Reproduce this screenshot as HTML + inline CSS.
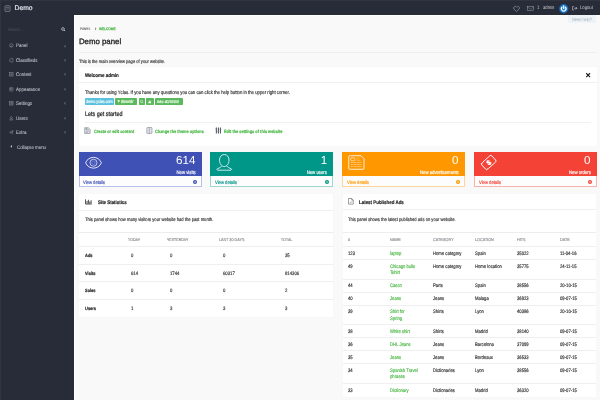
<!DOCTYPE html>
<html><head><meta charset="utf-8"><title>Demo panel</title>
<style>
html,body{margin:0;padding:0;width:600px;height:400px;overflow:hidden;background:#f9f9f9}
body{position:relative;font-family:"Liberation Sans",sans-serif}
.r{position:absolute;display:block}
#txt{position:absolute;left:0;top:0;width:600px;height:400px;will-change:transform}
.t{position:absolute;white-space:nowrap;line-height:0;text-rendering:geometricPrecision}
svg.r{overflow:visible}
</style></head><body>
<div class="r" style="left:0.00px;top:0.00px;width:600.00px;height:400.00px;background:#f9f9f9"></div>
<div class="r" style="left:0.00px;top:0.00px;width:600.00px;height:14.70px;background:#282c38"></div>
<div class="r" style="left:0.00px;top:0.00px;width:73.60px;height:400.00px;background:#282c38"></div>
<div class="r" style="left:0.00px;top:0.00px;width:600.00px;height:0.80px;background:#30343f"></div>
<div class="r" style="left:0.00px;top:0.00px;width:0.80px;height:400.00px;background:#30343f"></div>
<div class="r" style="left:73.60px;top:14.70px;width:526.40px;height:385.30px;background:#f9f9f9;border-left:1px solid #fff;border-top:1px solid #fff;box-sizing:border-box"></div>
<svg class="r" style="left:4px;top:4.5px" width="7" height="7" viewBox="0 0 7 7"><rect x="1" y="0.8" width="5" height="5.6" rx="0.6" fill="none" stroke="#8b909c" stroke-width="0.7"/><line x1="2" y1="2.5" x2="5" y2="2.5" stroke="#8b909c" stroke-width="0.5"/><line x1="2" y1="4" x2="5" y2="4" stroke="#8b909c" stroke-width="0.5"/></svg>
<svg class="r" style="left:512.5px;top:5.8px" width="7" height="6" viewBox="0 0 14 12"><path d="M7 11 L1.8 6 A3 3 0 0 1 7 2.2 A3 3 0 0 1 12.2 6 Z" fill="none" stroke="#b9bdc5" stroke-width="1.0" stroke-linejoin="round"/></svg>
<svg class="r" style="left:526.5px;top:6px" width="7" height="5" viewBox="0 0 14 10"><rect x="0.8" y="0.8" width="12.4" height="8.4" fill="none" stroke="#a9adb6" stroke-width="0.9"/><path d="M0.8 2 L7 6 L13.2 2" fill="none" stroke="#a9adb6" stroke-width="0.7"/></svg>
<svg class="r" style="left:559px;top:4px" width="9.4" height="9.4" viewBox="0 0 20 20"><circle cx="10" cy="10" r="10" fill="#1565b5"/><circle cx="10" cy="10" r="7.6" fill="#2a86d0"/><path d="M6.4 6.6 A4.9 4.9 0 1 0 13.6 6.6" fill="none" stroke="#fff" stroke-width="2.4" stroke-linecap="round"/><line x1="10" y1="3.8" x2="10" y2="9.6" stroke="#fff" stroke-width="2.4" stroke-linecap="round"/></svg>
<svg class="r" style="left:572.3px;top:6.3px" width="5.5" height="4.5" viewBox="0 0 11 9"><path d="M4 1 H1 V8 H4" fill="none" stroke="#c9ccd3" stroke-width="1.1"/><path d="M4 4.5 H10 M7.5 2 L10 4.5 L7.5 7" fill="none" stroke="#c9ccd3" stroke-width="1.3"/></svg>
<div class="r" style="left:567.50px;top:15.30px;width:28.80px;height:7.30px;background:#eef3f8;border-radius:0 0 1px 1px"></div>
<svg class="r" style="left:60.8px;top:26.8px" width="4.6" height="4.6" viewBox="0 0 10 10"><circle cx="4.3" cy="4.3" r="3" fill="none" stroke="#dfe2e8" stroke-width="1.4"/><line x1="6.5" y1="6.5" x2="9" y2="9" stroke="#dfe2e8" stroke-width="1.6"/></svg>
<svg class="r" style="left:8.7px;top:43.30px" width="4.6" height="4.6" viewBox="0 0 10 10"><circle cx="5" cy="5.3" r="3.8" fill="none" stroke="#8c919c" stroke-width="1.1"/><path d="M5 5.3 L6.8 3.2" stroke="#8c919c" stroke-width="1"/><path d="M2.3 7.6 H7.7" stroke="#8c919c" stroke-width="1"/></svg>
<svg class="r" style="left:63.8px;top:44.50px" width="2" height="2.6" viewBox="0 0 6 8"><path d="M5 0.8 L1.3 4 L5 7.2" fill="none" stroke="#b4b8c1" stroke-width="1.5"/></svg>
<svg class="r" style="left:8.7px;top:57.75px" width="4.6" height="4.6" viewBox="0 0 10 10"><path d="M1.5 3 L3.2 1.2 H8.5 V8.8 H3.2 L1.5 7 Z" fill="none" stroke="#8c919c" stroke-width="1.1"/><circle cx="3.6" cy="5" r="0.7" fill="#8c919c"/></svg>
<svg class="r" style="left:63.8px;top:58.95px" width="2" height="2.6" viewBox="0 0 6 8"><path d="M5 0.8 L1.3 4 L5 7.2" fill="none" stroke="#b4b8c1" stroke-width="1.5"/></svg>
<svg class="r" style="left:8.7px;top:72.20px" width="4.6" height="4.6" viewBox="0 0 10 10"><rect x="1.2" y="1.2" width="7.6" height="7.6" fill="none" stroke="#8c919c" stroke-width="1.1"/><path d="M5 1.2 V8.8 M1.2 5 H8.8" stroke="#8c919c" stroke-width="1"/></svg>
<svg class="r" style="left:63.8px;top:73.40px" width="2" height="2.6" viewBox="0 0 6 8"><path d="M5 0.8 L1.3 4 L5 7.2" fill="none" stroke="#b4b8c1" stroke-width="1.5"/></svg>
<svg class="r" style="left:8.7px;top:86.65px" width="4.6" height="4.6" viewBox="0 0 10 10"><rect x="1.4" y="1.2" width="7.2" height="7.6" rx="0.8" fill="none" stroke="#8c919c" stroke-width="1.1"/><rect x="3.4" y="3.2" width="3.2" height="3.2" fill="none" stroke="#8c919c" stroke-width="0.8"/></svg>
<svg class="r" style="left:63.8px;top:87.85px" width="2" height="2.6" viewBox="0 0 6 8"><path d="M5 0.8 L1.3 4 L5 7.2" fill="none" stroke="#b4b8c1" stroke-width="1.5"/></svg>
<svg class="r" style="left:8.7px;top:101.10px" width="4.6" height="4.6" viewBox="0 0 10 10"><rect x="1.2" y="1.2" width="7.6" height="7.6" fill="none" stroke="#8c919c" stroke-width="1.1"/><path d="M1.2 3.8 H8.8 M1.2 6.2 H8.8 M5 1.2 V8.8" stroke="#8c919c" stroke-width="0.9"/></svg>
<svg class="r" style="left:63.8px;top:102.30px" width="2" height="2.6" viewBox="0 0 6 8"><path d="M5 0.8 L1.3 4 L5 7.2" fill="none" stroke="#b4b8c1" stroke-width="1.5"/></svg>
<svg class="r" style="left:8.7px;top:115.55px" width="4.6" height="4.6" viewBox="0 0 10 10"><circle cx="5" cy="3.4" r="2.2" fill="none" stroke="#8c919c" stroke-width="1"/><path d="M1.3 8.8 Q1.5 6 5 6 Q8.5 6 8.7 8.8 Z" fill="none" stroke="#8c919c" stroke-width="1"/></svg>
<svg class="r" style="left:63.8px;top:116.75px" width="2" height="2.6" viewBox="0 0 6 8"><path d="M5 0.8 L1.3 4 L5 7.2" fill="none" stroke="#b4b8c1" stroke-width="1.5"/></svg>
<svg class="r" style="left:8.7px;top:130.00px" width="4.6" height="4.6" viewBox="0 0 10 10"><path d="M1 5.2 L8.8 1.2 L6.8 8.8 L4.6 6.2 Z M4.6 6.2 L8.8 1.2" fill="none" stroke="#8c919c" stroke-width="1" stroke-linejoin="round"/></svg>
<svg class="r" style="left:63.8px;top:131.20px" width="2" height="2.6" viewBox="0 0 6 8"><path d="M5 0.8 L1.3 4 L5 7.2" fill="none" stroke="#b4b8c1" stroke-width="1.5"/></svg>
<svg class="r" style="left:10.0px;top:145.45px" width="2.2" height="2.8" viewBox="0 0 6 8"><path d="M5.5 0.3 L0.8 4 L5.5 7.7 Z" fill="#c4c8d0"/></svg>
<div class="r" style="left:79.00px;top:51.80px;width:517.50px;height:0.50px;background:#efefef"></div>
<div class="r" style="left:79.00px;top:67.10px;width:517.50px;height:78.50px;background:#fff;box-shadow:0 0 0.6px rgba(0,0,0,0.12)"></div>
<svg class="r" style="left:585.9px;top:73.0px" width="4.3" height="4.3" viewBox="0 0 10 10"><path d="M1.5 1.5 L8.5 8.5 M8.5 1.5 L1.5 8.5" stroke="#1a1a1a" stroke-width="2.6" stroke-linecap="square"/></svg>
<div class="r" style="left:79.00px;top:82.10px;width:517.50px;height:0.50px;background:#f0f0f0"></div>
<div class="r" style="left:84.80px;top:98.30px;width:29.20px;height:6.40px;background:#5bc0de;border-radius:0.8px"></div>
<div class="r" style="left:114.80px;top:98.30px;width:22.50px;height:6.40px;background:#5cb85c;border-radius:0.8px"></div>
<div class="r" style="left:138.70px;top:98.30px;width:6.10px;height:6.40px;background:#5cb85c;border-radius:0.8px"></div>
<div class="r" style="left:145.70px;top:98.30px;width:8.30px;height:6.40px;background:#5cb85c;border-radius:0.8px"></div>
<div class="r" style="left:155.20px;top:98.30px;width:28.00px;height:6.40px;background:#5cb85c;border-radius:0.8px"></div>
<svg class="r" style="left:117px;top:100.2px" width="3.4" height="3" viewBox="0 0 10 9"><path d="M1 1 H9 L5 8 Z" fill="#fff"/></svg>
<svg class="r" style="left:140px;top:99.7px" width="3.5" height="3.5" viewBox="0 0 10 10"><circle cx="4.2" cy="4.2" r="3" fill="none" stroke="#fff" stroke-width="1.4"/><path d="M6.4 6.4 L9 9" stroke="#fff" stroke-width="1.6"/></svg>
<svg class="r" style="left:148px;top:99.6px" width="3.6" height="3.6" viewBox="0 0 10 10"><path d="M1 9 V5 H3 L5 1 Q6.5 1 6.3 3 L6 4.5 H9 L8 9 Z" fill="#fff"/></svg>
<div class="r" style="left:84.80px;top:121.70px;width:505.90px;height:0.50px;background:#f1f1f1"></div>
<svg class="r" style="left:84.30px;top:127.2px" width="6.8" height="6.8" viewBox="0 0 10 10"><path d="M1 1 H6.5 L9 3.5 V9.5 H1 Z" fill="#e4e6ea" stroke="#7d828c" stroke-width="0.9"/><path d="M2.5 4 H7.5 M2.5 6 H7.5 M2.5 8 H6" stroke="#8a8f99" stroke-width="0.8"/><rect x="2.3" y="1.8" width="2.6" height="1.6" fill="#8a8f99"/></svg>
<svg class="r" style="left:145.70px;top:127.2px" width="6.8" height="6.8" viewBox="0 0 10 10"><rect x="1.2" y="0.8" width="7.6" height="8.6" rx="0.6" fill="#e6e8ec" stroke="#7d828c" stroke-width="0.9"/><path d="M5 0.8 V9.4" stroke="#8a8f99" stroke-width="0.8"/><rect x="2" y="3.5" width="2.2" height="3" fill="#c9d0e0"/></svg>
<svg class="r" style="left:215.00px;top:127.2px" width="6.8" height="6.8" viewBox="0 0 10 10"><path d="M2 0.8 V9.5 M5 0.8 V9.5 M8 0.8 V9.5" stroke="#4d5360" stroke-width="1.5"/><path d="M0.8 3 H3.2 M3.8 6.5 H6.2 M6.8 4 H9.2" stroke="#6b7280" stroke-width="1.4"/></svg>
<div class="r" style="left:78.60px;top:152.20px;width:123.00px;height:35.30px;background:#fdfdfd;border:0.6px solid #b8c0e8;box-sizing:border-box"></div>
<div class="r" style="left:78.60px;top:152.20px;width:123.00px;height:23.60px;background:#3f51b5"></div>
<svg class="r" style="left:193.00px;top:179.8px" width="4" height="4" viewBox="0 0 10 10"><circle cx="5" cy="5" r="5" fill="#3f51b5"/><path d="M3.2 5 H6.5 M5 3.3 L6.7 5 L5 6.7" fill="none" stroke="#fff" stroke-width="1.4"/></svg>
<div class="r" style="left:210.40px;top:152.20px;width:122.90px;height:35.30px;background:#fdfdfd;border:0.6px solid #9fd6d0;box-sizing:border-box"></div>
<div class="r" style="left:210.40px;top:152.20px;width:122.90px;height:23.60px;background:#009688"></div>
<svg class="r" style="left:324.70px;top:179.8px" width="4" height="4" viewBox="0 0 10 10"><circle cx="5" cy="5" r="5" fill="#009688"/><path d="M3.2 5 H6.5 M5 3.3 L6.7 5 L5 6.7" fill="none" stroke="#fff" stroke-width="1.4"/></svg>
<div class="r" style="left:342.00px;top:152.20px;width:122.60px;height:35.30px;background:#fdfdfd;border:0.6px solid #ffd49a;box-sizing:border-box"></div>
<div class="r" style="left:342.00px;top:152.20px;width:122.60px;height:23.60px;background:#ff9800"></div>
<svg class="r" style="left:456.00px;top:179.8px" width="4" height="4" viewBox="0 0 10 10"><circle cx="5" cy="5" r="5" fill="#ff9800"/><path d="M3.2 5 H6.5 M5 3.3 L6.7 5 L5 6.7" fill="none" stroke="#fff" stroke-width="1.4"/></svg>
<div class="r" style="left:473.80px;top:152.20px;width:122.80px;height:35.30px;background:#fdfdfd;border:0.6px solid #f8b3ad;box-sizing:border-box"></div>
<div class="r" style="left:473.80px;top:152.20px;width:122.80px;height:23.60px;background:#f44336"></div>
<svg class="r" style="left:588.00px;top:179.8px" width="4" height="4" viewBox="0 0 10 10"><circle cx="5" cy="5" r="5" fill="#f44336"/><path d="M3.2 5 H6.5 M5 3.3 L6.7 5 L5 6.7" fill="none" stroke="#fff" stroke-width="1.4"/></svg>
<svg class="r" style="left:84.5px;top:156.5px" width="17" height="11.5" viewBox="0 0 34 23"><path d="M1.2 11.5 C7 -2.8 27 -2.8 32.8 11.5 C27 25.8 7 25.8 1.2 11.5 Z" fill="none" stroke="#fff" stroke-width="1.7"/><circle cx="17" cy="11.5" r="7.0" fill="none" stroke="#fff" stroke-width="1.3"/><circle cx="17" cy="11.5" r="3.4" fill="none" stroke="#fff" stroke-width="0.7" opacity="0.6"/></svg>
<svg class="r" style="left:216px;top:154px" width="17" height="17" viewBox="0 0 34 34"><path d="M16.5 1 C22.5 1 26 6 26 12.5 C26 19 21.5 25.2 16.5 25.2 C11.5 25.2 7 19 7 12.5 C7 6 10.5 1 16.5 1 Z" fill="none" stroke="#fff" stroke-width="1.6"/><path d="M11.5 23.8 Q9.5 27.5 2.5 29.6 Q0.8 31.2 3 32.4 H30 Q32.2 31.2 30.5 29.6 Q23.5 27.5 21.5 23.8" fill="none" stroke="#fff" stroke-width="1.6"/></svg>
<svg class="r" style="left:347.5px;top:154.5px" width="17" height="15.5" viewBox="0 0 34 31"><path d="M3 1.5 H26 L32 7.5 V27 Q32 28.5 30.5 28.5 H3 Q1.5 28.5 1.5 27 V3 Q1.5 1.5 3 1.5 Z" fill="none" stroke="#fff" stroke-width="1.7"/><rect x="5.5" y="5.5" width="8" height="6" rx="2" fill="none" stroke="#fff" stroke-width="1.2"/><path d="M17 6.5 H21 M17 10.5 H25 M6 15 H27 M6 19 H27 M6 23 H27" stroke="#fff" stroke-width="1.0" stroke-dasharray="2 0.8"/></svg>
<svg class="r" style="left:479.5px;top:154px" width="17.5" height="17" viewBox="0 0 35 34"><g transform="rotate(-42 17.5 17)"><path d="M5 8.5 Q7 10.5 9 8.5 H28 Q31 8.5 31 11.5 V22.5 Q31 25.5 28 25.5 H9 Q7 23.5 5 25.5 Q4 25.5 4 22.5 V11.5 Q4 8.5 5 8.5 Z" fill="none" stroke="#fff" stroke-width="1.8"/><text x="17.8" y="21.8" font-size="13" font-family="Liberation Sans" fill="none" stroke="#fff" stroke-width="1" text-anchor="middle">$</text></g></svg>
<div class="r" style="left:79.00px;top:194.20px;width:254.30px;height:123.30px;background:#fff;box-shadow:0 0 0.6px rgba(0,0,0,0.12)"></div>
<svg class="r" style="left:84.6px;top:198.8px" width="7" height="5.6" viewBox="0 0 14 11"><path d="M1 0.5 V10 H13.5" fill="none" stroke="#2a2a2a" stroke-width="1.5"/><path d="M4 9.2 V4 M6.8 9.2 V1.5 M9.6 9.2 V5 M12.2 9.2 V2.5" stroke="#2a2a2a" stroke-width="1.7"/></svg>
<div class="r" style="left:79.00px;top:210.00px;width:254.30px;height:0.50px;background:#efefef"></div>
<div class="r" style="left:79.00px;top:232.20px;width:254.30px;height:0.50px;background:#ededed"></div>
<div class="r" style="left:79.00px;top:246.00px;width:254.30px;height:0.50px;background:#efefef"></div>
<div class="r" style="left:79.00px;top:263.60px;width:254.30px;height:0.50px;background:#efefef"></div>
<div class="r" style="left:79.00px;top:281.40px;width:254.30px;height:0.50px;background:#efefef"></div>
<div class="r" style="left:79.00px;top:299.20px;width:254.30px;height:0.50px;background:#efefef"></div>
<div class="r" style="left:342.50px;top:193.60px;width:253.50px;height:203.20px;background:#fff;box-shadow:0 0 0.6px rgba(0,0,0,0.12)"></div>
<svg class="r" style="left:347.8px;top:198.3px" width="5.8" height="6.6" viewBox="0 0 12 14"><path d="M1 1 H7.5 L11 4.5 V13 H1 Z" fill="none" stroke="#444" stroke-width="1.1"/><path d="M7.5 1 V4.5 H11" fill="none" stroke="#444" stroke-width="0.9"/><path d="M4 8.5 L5.5 10 L8.5 7" fill="none" stroke="#444" stroke-width="1"/></svg>
<div class="r" style="left:342.50px;top:209.40px;width:253.50px;height:0.50px;background:#efefef"></div>
<div class="r" style="left:342.50px;top:232.10px;width:253.50px;height:0.50px;background:#ededed"></div>
<div class="r" style="left:342.50px;top:245.95px;width:253.50px;height:0.50px;background:#efefef"></div>
<div class="r" style="left:342.50px;top:258.95px;width:253.50px;height:0.50px;background:#efefef"></div>
<div class="r" style="left:342.50px;top:278.55px;width:253.50px;height:0.50px;background:#efefef"></div>
<div class="r" style="left:342.50px;top:291.55px;width:253.50px;height:0.50px;background:#efefef"></div>
<div class="r" style="left:342.50px;top:304.55px;width:253.50px;height:0.50px;background:#efefef"></div>
<div class="r" style="left:342.50px;top:324.15px;width:253.50px;height:0.50px;background:#efefef"></div>
<div class="r" style="left:342.50px;top:337.15px;width:253.50px;height:0.50px;background:#efefef"></div>
<div class="r" style="left:342.50px;top:350.15px;width:253.50px;height:0.50px;background:#efefef"></div>
<div class="r" style="left:342.50px;top:363.15px;width:253.50px;height:0.50px;background:#efefef"></div>
<div class="r" style="left:342.50px;top:382.75px;width:253.50px;height:0.50px;background:#efefef"></div>
<div id="txt"><div class="t" style="left:14.60px;transform-origin:0 0;top:9px;font-size:6.75px;color:#e6e9f0;font-weight:normal;-webkit-text-stroke:0.16px #e6e9f0;">Demo</div>
<div class="t" style="left:537.00px;transform-origin:0 0;top:9px;font-size:4.96px;color:#c9cdd4;font-weight:normal;transform:scaleX(0.8475);-webkit-text-stroke:0.16px #c9cdd4;-webkit-text-stroke:0">1</div>
<div class="t" style="left:543.30px;transform-origin:0 0;top:9px;font-size:4.96px;color:#c9cdd4;font-weight:normal;transform:scaleX(0.8475);-webkit-text-stroke:0.16px #c9cdd4;-webkit-text-stroke:0">admin</div>
<div class="t" style="left:580.00px;transform-origin:0 0;top:9px;font-size:4.96px;color:#c9cdd4;font-weight:normal;transform:scaleX(0.8475);-webkit-text-stroke:0.16px #c9cdd4;-webkit-text-stroke:0">Logout</div>
<div class="t" style="left:572.00px;transform-origin:0 0;top:20px;font-size:4.60px;color:#aab1bb;font-weight:normal;transform:scaleX(0.8475);-webkit-text-stroke:0.16px #aab1bb;-webkit-text-stroke:0">Need help?</div>
<div class="t" style="left:8.10px;transform-origin:0 0;top:30px;font-size:4.60px;color:#4d525e;font-weight:normal;transform:scaleX(0.8475);-webkit-text-stroke:0.16px #4d525e;-webkit-text-stroke:0">Search...</div>
<div class="t" style="left:16.30px;transform-origin:0 0;top:46px;font-size:5.25px;color:#cdd1d9;font-weight:normal;transform:scaleX(0.8475);-webkit-text-stroke:0.16px #cdd1d9;-webkit-text-stroke:0.03px #cdd1d9">Panel</div>
<div class="t" style="left:16.30px;transform-origin:0 0;top:61px;font-size:5.25px;color:#cdd1d9;font-weight:normal;transform:scaleX(0.8475);-webkit-text-stroke:0.16px #cdd1d9;-webkit-text-stroke:0.03px #cdd1d9">Classifieds</div>
<div class="t" style="left:16.30px;transform-origin:0 0;top:75px;font-size:5.25px;color:#cdd1d9;font-weight:normal;transform:scaleX(0.8475);-webkit-text-stroke:0.16px #cdd1d9;-webkit-text-stroke:0.03px #cdd1d9">Content</div>
<div class="t" style="left:16.30px;transform-origin:0 0;top:90px;font-size:5.25px;color:#cdd1d9;font-weight:normal;transform:scaleX(0.8475);-webkit-text-stroke:0.16px #cdd1d9;-webkit-text-stroke:0.03px #cdd1d9">Appearance</div>
<div class="t" style="left:16.30px;transform-origin:0 0;top:104px;font-size:5.25px;color:#cdd1d9;font-weight:normal;transform:scaleX(0.8475);-webkit-text-stroke:0.16px #cdd1d9;-webkit-text-stroke:0.03px #cdd1d9">Settings</div>
<div class="t" style="left:16.30px;transform-origin:0 0;top:119px;font-size:5.25px;color:#cdd1d9;font-weight:normal;transform:scaleX(0.8475);-webkit-text-stroke:0.16px #cdd1d9;-webkit-text-stroke:0.03px #cdd1d9">Users</div>
<div class="t" style="left:16.30px;transform-origin:0 0;top:133px;font-size:5.25px;color:#cdd1d9;font-weight:normal;transform:scaleX(0.8475);-webkit-text-stroke:0.16px #cdd1d9;-webkit-text-stroke:0.03px #cdd1d9">Extra</div>
<div class="t" style="left:16.90px;transform-origin:0 0;top:148px;font-size:5.14px;color:#cdd1d9;font-weight:normal;transform:scaleX(0.8475);-webkit-text-stroke:0.16px #cdd1d9;-webkit-text-stroke:0.03px #cdd1d9">Collapse menu</div>
<div class="t" style="left:80.20px;transform-origin:0 0;top:29px;font-size:3.67px;color:#6a6d72;font-weight:normal;transform:scaleX(0.8929);-webkit-text-stroke:0.16px #6a6d72;">PANEL</div>
<div class="t" style="left:95.00px;transform-origin:0 0;top:29px;font-size:4.72px;color:#555;font-weight:normal;transform:scaleX(0.8475);-webkit-text-stroke:0.16px #555;">&#8250;</div>
<div class="t" style="left:99.00px;transform-origin:0 0;top:29px;font-size:3.62px;color:#4cb847;font-weight:normal;transform:scaleX(0.8929);-webkit-text-stroke:0.16px #4cb847;-webkit-text-stroke:0.25px #4cb847">WELCOME</div>
<div class="t" style="left:78.90px;transform-origin:0 0;top:42px;font-size:7.85px;color:#222;font-weight:normal;-webkit-text-stroke:0.16px #222;-webkit-text-stroke:0.3px #222">Demo panel</div>
<div class="t" style="left:78.80px;transform-origin:0 0;top:63px;font-size:4.84px;color:#333;font-weight:normal;transform:scaleX(0.8475);-webkit-text-stroke:0.16px #333;">This is the main overview page of your website.</div>
<div class="t" style="left:84.80px;transform-origin:0 0;top:76px;font-size:5.26px;color:#222;font-weight:bold;transform:scaleX(0.8475);-webkit-text-stroke:0.18px #222;">Welcome admin</div>
<div class="t" style="left:84.80px;transform-origin:0 0;top:93px;font-size:5.05px;color:#333;font-weight:normal;transform:scaleX(0.8475);-webkit-text-stroke:0.16px #333;">Thanks for using Yclas. If you have any questions you can can click the help button in the upper right corner.</div>
<div class="t" style="left:86.00px;transform-origin:0 0;top:102px;font-size:4.37px;color:#f2fbff;font-weight:normal;transform:scaleX(0.8475);-webkit-text-stroke:0.16px #f2fbff;">demo.yclas.com</div>
<div class="t" style="left:121.40px;transform-origin:0 0;top:102px;font-size:4.48px;color:#f2fff2;font-weight:normal;transform:scaleX(0.8475);-webkit-text-stroke:0.16px #f2fff2;">downdr</div>
<div class="t" style="left:157.00px;transform-origin:0 0;top:102px;font-size:4.01px;color:#f2fff2;font-weight:normal;transform:scaleX(0.8475);-webkit-text-stroke:0.16px #f2fff2;">Ads: 40/10000</div>
<div class="t" style="left:84.80px;transform-origin:0 0;top:115px;font-size:6.42px;color:#222;font-weight:normal;transform:scaleX(0.8475);-webkit-text-stroke:0.16px #222;-webkit-text-stroke:0.22px #222">Lets get started</div>
<div class="t" style="left:93.50px;transform-origin:0 0;top:132px;font-size:4.60px;color:#4cb847;font-weight:bold;transform:scaleX(0.8475);-webkit-text-stroke:0.18px #4cb847;">Create or edit content</div>
<div class="t" style="left:154.90px;transform-origin:0 0;top:132px;font-size:4.60px;color:#4cb847;font-weight:bold;transform:scaleX(0.8475);-webkit-text-stroke:0.18px #4cb847;">Change the theme options</div>
<div class="t" style="left:224.20px;transform-origin:0 0;top:132px;font-size:4.60px;color:#4cb847;font-weight:bold;transform:scaleX(0.8475);-webkit-text-stroke:0.18px #4cb847;">Edit the settings of this website</div>
<div class="t" style="right:404.60px;transform-origin:100% 0;top:161px;font-size:11.60px;color:#fff;font-weight:normal;-webkit-text-stroke:0px #fff;">614</div>
<div class="t" style="right:404.60px;transform-origin:100% 0;top:173px;font-size:5.05px;color:#fff;font-weight:normal;transform:scaleX(0.8475);-webkit-text-stroke:0.16px #fff;">New visits</div>
<div class="t" style="left:83.40px;transform-origin:0 0;top:184px;font-size:4.92px;color:#3f51b5;font-weight:normal;transform:scaleX(0.8475);-webkit-text-stroke:0.16px #3f51b5;">View details</div>
<div class="t" style="right:272.90px;transform-origin:100% 0;top:161px;font-size:11.60px;color:#fff;font-weight:normal;-webkit-text-stroke:0px #fff;">1</div>
<div class="t" style="right:272.90px;transform-origin:100% 0;top:173px;font-size:5.05px;color:#fff;font-weight:normal;transform:scaleX(0.8475);-webkit-text-stroke:0.16px #fff;">New users</div>
<div class="t" style="left:215.20px;transform-origin:0 0;top:184px;font-size:4.92px;color:#009688;font-weight:normal;transform:scaleX(0.8475);-webkit-text-stroke:0.16px #009688;">View details</div>
<div class="t" style="right:141.60px;transform-origin:100% 0;top:161px;font-size:11.60px;color:#fff;font-weight:normal;-webkit-text-stroke:0px #fff;">0</div>
<div class="t" style="right:141.60px;transform-origin:100% 0;top:173px;font-size:5.05px;color:#fff;font-weight:normal;transform:scaleX(0.8475);-webkit-text-stroke:0.16px #fff;">New advertisements</div>
<div class="t" style="left:346.80px;transform-origin:0 0;top:184px;font-size:4.92px;color:#ff9800;font-weight:normal;transform:scaleX(0.8475);-webkit-text-stroke:0.16px #ff9800;">View details</div>
<div class="t" style="right:9.60px;transform-origin:100% 0;top:161px;font-size:11.60px;color:#fff;font-weight:normal;-webkit-text-stroke:0px #fff;">0</div>
<div class="t" style="right:9.60px;transform-origin:100% 0;top:173px;font-size:5.05px;color:#fff;font-weight:normal;transform:scaleX(0.8475);-webkit-text-stroke:0.16px #fff;">New orders</div>
<div class="t" style="left:478.60px;transform-origin:0 0;top:184px;font-size:4.92px;color:#f44336;font-weight:normal;transform:scaleX(0.8475);-webkit-text-stroke:0.16px #f44336;">View details</div>
<div class="t" style="left:98.20px;transform-origin:0 0;top:203px;font-size:5.18px;color:#222;font-weight:bold;transform:scaleX(0.8475);-webkit-text-stroke:0.18px #222;">Site Statistics</div>
<div class="t" style="left:84.70px;transform-origin:0 0;top:221px;font-size:4.90px;color:#333;font-weight:normal;transform:scaleX(0.8475);-webkit-text-stroke:0.16px #333;">This panel shows how many visitors your website had the past month.</div>
<div class="t" style="left:128.00px;transform-origin:0 0;top:240px;font-size:3.98px;color:#8e9196;font-weight:normal;transform:scaleX(0.9091);-webkit-text-stroke:0.16px #8e9196;">TODAY</div>
<div class="t" style="left:166.70px;transform-origin:0 0;top:240px;font-size:3.91px;color:#8e9196;font-weight:normal;transform:scaleX(0.9091);-webkit-text-stroke:0.16px #8e9196;">YESTERDAY</div>
<div class="t" style="left:219.40px;transform-origin:0 0;top:240px;font-size:4.11px;color:#8e9196;font-weight:normal;transform:scaleX(0.9091);-webkit-text-stroke:0.16px #8e9196;">LAST 30 DAYS</div>
<div class="t" style="left:281.10px;transform-origin:0 0;top:240px;font-size:3.98px;color:#8e9196;font-weight:normal;transform:scaleX(0.9091);-webkit-text-stroke:0.16px #8e9196;">TOTAL</div>
<div class="t" style="left:84.80px;transform-origin:0 0;top:256px;font-size:4.72px;color:#222;font-weight:bold;transform:scaleX(0.8475);-webkit-text-stroke:0.18px #222;">Ads</div>
<div class="t" style="left:131.40px;transform-origin:0 0;top:256px;font-size:5.01px;color:#333;font-weight:normal;transform:scaleX(0.8475);-webkit-text-stroke:0.16px #333;">0</div>
<div class="t" style="left:170.30px;transform-origin:0 0;top:256px;font-size:5.01px;color:#333;font-weight:normal;transform:scaleX(0.8475);-webkit-text-stroke:0.16px #333;">0</div>
<div class="t" style="left:222.80px;transform-origin:0 0;top:256px;font-size:5.01px;color:#333;font-weight:normal;transform:scaleX(0.8475);-webkit-text-stroke:0.16px #333;">0</div>
<div class="t" style="left:284.50px;transform-origin:0 0;top:256px;font-size:5.01px;color:#333;font-weight:normal;transform:scaleX(0.8475);-webkit-text-stroke:0.16px #333;">35</div>
<div class="t" style="left:84.80px;transform-origin:0 0;top:274px;font-size:4.72px;color:#222;font-weight:bold;transform:scaleX(0.8475);-webkit-text-stroke:0.18px #222;">Visits</div>
<div class="t" style="left:131.40px;transform-origin:0 0;top:274px;font-size:5.01px;color:#333;font-weight:normal;transform:scaleX(0.8475);-webkit-text-stroke:0.16px #333;">614</div>
<div class="t" style="left:170.30px;transform-origin:0 0;top:274px;font-size:5.01px;color:#333;font-weight:normal;transform:scaleX(0.8475);-webkit-text-stroke:0.16px #333;">1744</div>
<div class="t" style="left:222.80px;transform-origin:0 0;top:274px;font-size:5.01px;color:#333;font-weight:normal;transform:scaleX(0.8475);-webkit-text-stroke:0.16px #333;">60317</div>
<div class="t" style="left:284.50px;transform-origin:0 0;top:274px;font-size:5.01px;color:#333;font-weight:normal;transform:scaleX(0.8475);-webkit-text-stroke:0.16px #333;">814306</div>
<div class="t" style="left:84.80px;transform-origin:0 0;top:291px;font-size:4.72px;color:#222;font-weight:bold;transform:scaleX(0.8475);-webkit-text-stroke:0.18px #222;">Sales</div>
<div class="t" style="left:131.40px;transform-origin:0 0;top:291px;font-size:5.01px;color:#333;font-weight:normal;transform:scaleX(0.8475);-webkit-text-stroke:0.16px #333;">0</div>
<div class="t" style="left:170.30px;transform-origin:0 0;top:291px;font-size:5.01px;color:#333;font-weight:normal;transform:scaleX(0.8475);-webkit-text-stroke:0.16px #333;">0</div>
<div class="t" style="left:222.80px;transform-origin:0 0;top:291px;font-size:5.01px;color:#333;font-weight:normal;transform:scaleX(0.8475);-webkit-text-stroke:0.16px #333;">0</div>
<div class="t" style="left:284.50px;transform-origin:0 0;top:291px;font-size:5.01px;color:#333;font-weight:normal;transform:scaleX(0.8475);-webkit-text-stroke:0.16px #333;">2</div>
<div class="t" style="left:84.80px;transform-origin:0 0;top:309px;font-size:4.72px;color:#222;font-weight:bold;transform:scaleX(0.8475);-webkit-text-stroke:0.18px #222;">Users</div>
<div class="t" style="left:131.40px;transform-origin:0 0;top:309px;font-size:5.01px;color:#333;font-weight:normal;transform:scaleX(0.8475);-webkit-text-stroke:0.16px #333;">1</div>
<div class="t" style="left:170.30px;transform-origin:0 0;top:309px;font-size:5.01px;color:#333;font-weight:normal;transform:scaleX(0.8475);-webkit-text-stroke:0.16px #333;">3</div>
<div class="t" style="left:222.80px;transform-origin:0 0;top:309px;font-size:5.01px;color:#333;font-weight:normal;transform:scaleX(0.8475);-webkit-text-stroke:0.16px #333;">3</div>
<div class="t" style="left:284.50px;transform-origin:0 0;top:309px;font-size:5.01px;color:#333;font-weight:normal;transform:scaleX(0.8475);-webkit-text-stroke:0.16px #333;">3</div>
<div class="t" style="left:358.90px;transform-origin:0 0;top:203px;font-size:5.22px;color:#222;font-weight:bold;transform:scaleX(0.8475);-webkit-text-stroke:0.18px #222;">Latest Published Ads</div>
<div class="t" style="left:348.10px;transform-origin:0 0;top:221px;font-size:4.89px;color:#333;font-weight:normal;transform:scaleX(0.8475);-webkit-text-stroke:0.16px #333;">This panel shows the latest published ads on your website.</div>
<div class="t" style="left:348.10px;transform-origin:0 0;top:240px;font-size:4.12px;color:#8e9196;font-weight:normal;transform:scaleX(0.9091);-webkit-text-stroke:0.16px #8e9196;">#</div>
<div class="t" style="left:390.40px;transform-origin:0 0;top:240px;font-size:4.12px;color:#8e9196;font-weight:normal;transform:scaleX(0.9091);-webkit-text-stroke:0.16px #8e9196;">NAME</div>
<div class="t" style="left:432.50px;transform-origin:0 0;top:240px;font-size:4.12px;color:#8e9196;font-weight:normal;transform:scaleX(0.9091);-webkit-text-stroke:0.16px #8e9196;">CATEGORY</div>
<div class="t" style="left:475.20px;transform-origin:0 0;top:240px;font-size:4.12px;color:#8e9196;font-weight:normal;transform:scaleX(0.9091);-webkit-text-stroke:0.16px #8e9196;">LOCATION</div>
<div class="t" style="left:517.20px;transform-origin:0 0;top:240px;font-size:4.12px;color:#8e9196;font-weight:normal;transform:scaleX(0.9091);-webkit-text-stroke:0.16px #8e9196;">HITS</div>
<div class="t" style="left:559.60px;transform-origin:0 0;top:240px;font-size:4.12px;color:#8e9196;font-weight:normal;transform:scaleX(0.9091);-webkit-text-stroke:0.16px #8e9196;">DATE</div>
<div class="t" style="left:348.10px;transform-origin:0 0;top:255px;font-size:4.96px;color:#333;font-weight:normal;transform:scaleX(0.8475);-webkit-text-stroke:0.16px #333;">123</div>
<div class="t" style="left:390.40px;transform-origin:0 0;top:255px;font-size:4.96px;color:#4cb847;font-weight:normal;transform:scaleX(0.8475);-webkit-text-stroke:0.16px #4cb847;">laptop</div>
<div class="t" style="left:432.50px;transform-origin:0 0;top:255px;font-size:4.96px;color:#333;font-weight:normal;transform:scaleX(0.8475);-webkit-text-stroke:0.16px #333;">Home category</div>
<div class="t" style="left:475.20px;transform-origin:0 0;top:255px;font-size:4.96px;color:#333;font-weight:normal;transform:scaleX(0.8475);-webkit-text-stroke:0.16px #333;">Spain</div>
<div class="t" style="left:517.20px;transform-origin:0 0;top:255px;font-size:4.96px;color:#333;font-weight:normal;transform:scaleX(0.8475);-webkit-text-stroke:0.16px #333;">35022</div>
<div class="t" style="left:559.60px;transform-origin:0 0;top:255px;font-size:4.96px;color:#333;font-weight:normal;transform:scaleX(0.8475);-webkit-text-stroke:0.16px #333;">11-04-16</div>
<div class="t" style="left:348.10px;transform-origin:0 0;top:268px;font-size:4.96px;color:#333;font-weight:normal;transform:scaleX(0.8475);-webkit-text-stroke:0.16px #333;">49</div>
<div class="t" style="left:390.40px;transform-origin:0 0;top:268px;font-size:4.96px;color:#4cb847;font-weight:normal;transform:scaleX(0.8475);-webkit-text-stroke:0.16px #4cb847;">Chicago bulls</div>
<div class="t" style="left:390.40px;transform-origin:0 0;top:274px;font-size:4.96px;color:#4cb847;font-weight:normal;transform:scaleX(0.8475);-webkit-text-stroke:0.16px #4cb847;">Tshirt</div>
<div class="t" style="left:432.50px;transform-origin:0 0;top:268px;font-size:4.96px;color:#333;font-weight:normal;transform:scaleX(0.8475);-webkit-text-stroke:0.16px #333;">Home category</div>
<div class="t" style="left:475.20px;transform-origin:0 0;top:268px;font-size:4.96px;color:#333;font-weight:normal;transform:scaleX(0.8475);-webkit-text-stroke:0.16px #333;">Home location</div>
<div class="t" style="left:517.20px;transform-origin:0 0;top:268px;font-size:4.96px;color:#333;font-weight:normal;transform:scaleX(0.8475);-webkit-text-stroke:0.16px #333;">35775</div>
<div class="t" style="left:559.60px;transform-origin:0 0;top:268px;font-size:4.96px;color:#333;font-weight:normal;transform:scaleX(0.8475);-webkit-text-stroke:0.16px #333;">24-11-15</div>
<div class="t" style="left:348.10px;transform-origin:0 0;top:287px;font-size:4.96px;color:#333;font-weight:normal;transform:scaleX(0.8475);-webkit-text-stroke:0.16px #333;">44</div>
<div class="t" style="left:390.40px;transform-origin:0 0;top:287px;font-size:4.96px;color:#4cb847;font-weight:normal;transform:scaleX(0.8475);-webkit-text-stroke:0.16px #4cb847;">Casco</div>
<div class="t" style="left:432.50px;transform-origin:0 0;top:287px;font-size:4.96px;color:#333;font-weight:normal;transform:scaleX(0.8475);-webkit-text-stroke:0.16px #333;">Parts</div>
<div class="t" style="left:475.20px;transform-origin:0 0;top:287px;font-size:4.96px;color:#333;font-weight:normal;transform:scaleX(0.8475);-webkit-text-stroke:0.16px #333;">Spain</div>
<div class="t" style="left:517.20px;transform-origin:0 0;top:287px;font-size:4.96px;color:#333;font-weight:normal;transform:scaleX(0.8475);-webkit-text-stroke:0.16px #333;">38556</div>
<div class="t" style="left:559.60px;transform-origin:0 0;top:287px;font-size:4.96px;color:#333;font-weight:normal;transform:scaleX(0.8475);-webkit-text-stroke:0.16px #333;">20-10-15</div>
<div class="t" style="left:348.10px;transform-origin:0 0;top:300px;font-size:4.96px;color:#333;font-weight:normal;transform:scaleX(0.8475);-webkit-text-stroke:0.16px #333;">40</div>
<div class="t" style="left:390.40px;transform-origin:0 0;top:300px;font-size:4.96px;color:#4cb847;font-weight:normal;transform:scaleX(0.8475);-webkit-text-stroke:0.16px #4cb847;">Jeans</div>
<div class="t" style="left:432.50px;transform-origin:0 0;top:300px;font-size:4.96px;color:#333;font-weight:normal;transform:scaleX(0.8475);-webkit-text-stroke:0.16px #333;">Jeans</div>
<div class="t" style="left:475.20px;transform-origin:0 0;top:300px;font-size:4.96px;color:#333;font-weight:normal;transform:scaleX(0.8475);-webkit-text-stroke:0.16px #333;">Malaga</div>
<div class="t" style="left:517.20px;transform-origin:0 0;top:300px;font-size:4.96px;color:#333;font-weight:normal;transform:scaleX(0.8475);-webkit-text-stroke:0.16px #333;">36923</div>
<div class="t" style="left:559.60px;transform-origin:0 0;top:300px;font-size:4.96px;color:#333;font-weight:normal;transform:scaleX(0.8475);-webkit-text-stroke:0.16px #333;">09-07-15</div>
<div class="t" style="left:348.10px;transform-origin:0 0;top:313px;font-size:4.96px;color:#333;font-weight:normal;transform:scaleX(0.8475);-webkit-text-stroke:0.16px #333;">39</div>
<div class="t" style="left:390.40px;transform-origin:0 0;top:313px;font-size:4.96px;color:#4cb847;font-weight:normal;transform:scaleX(0.8475);-webkit-text-stroke:0.16px #4cb847;">Shirt for</div>
<div class="t" style="left:390.40px;transform-origin:0 0;top:320px;font-size:4.96px;color:#4cb847;font-weight:normal;transform:scaleX(0.8475);-webkit-text-stroke:0.16px #4cb847;">Spring</div>
<div class="t" style="left:432.50px;transform-origin:0 0;top:313px;font-size:4.96px;color:#333;font-weight:normal;transform:scaleX(0.8475);-webkit-text-stroke:0.16px #333;">Shirts</div>
<div class="t" style="left:475.20px;transform-origin:0 0;top:313px;font-size:4.96px;color:#333;font-weight:normal;transform:scaleX(0.8475);-webkit-text-stroke:0.16px #333;">Lyon</div>
<div class="t" style="left:517.20px;transform-origin:0 0;top:313px;font-size:4.96px;color:#333;font-weight:normal;transform:scaleX(0.8475);-webkit-text-stroke:0.16px #333;">40386</div>
<div class="t" style="left:559.60px;transform-origin:0 0;top:313px;font-size:4.96px;color:#333;font-weight:normal;transform:scaleX(0.8475);-webkit-text-stroke:0.16px #333;">20-10-15</div>
<div class="t" style="left:348.10px;transform-origin:0 0;top:333px;font-size:4.96px;color:#333;font-weight:normal;transform:scaleX(0.8475);-webkit-text-stroke:0.16px #333;">38</div>
<div class="t" style="left:390.40px;transform-origin:0 0;top:333px;font-size:4.96px;color:#4cb847;font-weight:normal;transform:scaleX(0.8475);-webkit-text-stroke:0.16px #4cb847;">White shirt</div>
<div class="t" style="left:432.50px;transform-origin:0 0;top:333px;font-size:4.96px;color:#333;font-weight:normal;transform:scaleX(0.8475);-webkit-text-stroke:0.16px #333;">Shirts</div>
<div class="t" style="left:475.20px;transform-origin:0 0;top:333px;font-size:4.96px;color:#333;font-weight:normal;transform:scaleX(0.8475);-webkit-text-stroke:0.16px #333;">Madrid</div>
<div class="t" style="left:517.20px;transform-origin:0 0;top:333px;font-size:4.96px;color:#333;font-weight:normal;transform:scaleX(0.8475);-webkit-text-stroke:0.16px #333;">38140</div>
<div class="t" style="left:559.60px;transform-origin:0 0;top:333px;font-size:4.96px;color:#333;font-weight:normal;transform:scaleX(0.8475);-webkit-text-stroke:0.16px #333;">09-07-15</div>
<div class="t" style="left:348.10px;transform-origin:0 0;top:346px;font-size:4.96px;color:#333;font-weight:normal;transform:scaleX(0.8475);-webkit-text-stroke:0.16px #333;">36</div>
<div class="t" style="left:390.40px;transform-origin:0 0;top:346px;font-size:4.96px;color:#4cb847;font-weight:normal;transform:scaleX(0.8475);-webkit-text-stroke:0.16px #4cb847;">DHL Jeans</div>
<div class="t" style="left:432.50px;transform-origin:0 0;top:346px;font-size:4.96px;color:#333;font-weight:normal;transform:scaleX(0.8475);-webkit-text-stroke:0.16px #333;">Jeans</div>
<div class="t" style="left:475.20px;transform-origin:0 0;top:346px;font-size:4.96px;color:#333;font-weight:normal;transform:scaleX(0.8475);-webkit-text-stroke:0.16px #333;">Barcelona</div>
<div class="t" style="left:517.20px;transform-origin:0 0;top:346px;font-size:4.96px;color:#333;font-weight:normal;transform:scaleX(0.8475);-webkit-text-stroke:0.16px #333;">37099</div>
<div class="t" style="left:559.60px;transform-origin:0 0;top:346px;font-size:4.96px;color:#333;font-weight:normal;transform:scaleX(0.8475);-webkit-text-stroke:0.16px #333;">09-07-15</div>
<div class="t" style="left:348.10px;transform-origin:0 0;top:359px;font-size:4.96px;color:#333;font-weight:normal;transform:scaleX(0.8475);-webkit-text-stroke:0.16px #333;">35</div>
<div class="t" style="left:390.40px;transform-origin:0 0;top:359px;font-size:4.96px;color:#4cb847;font-weight:normal;transform:scaleX(0.8475);-webkit-text-stroke:0.16px #4cb847;">Jeans</div>
<div class="t" style="left:432.50px;transform-origin:0 0;top:359px;font-size:4.96px;color:#333;font-weight:normal;transform:scaleX(0.8475);-webkit-text-stroke:0.16px #333;">Jeans</div>
<div class="t" style="left:475.20px;transform-origin:0 0;top:359px;font-size:4.96px;color:#333;font-weight:normal;transform:scaleX(0.8475);-webkit-text-stroke:0.16px #333;">Bordeaux</div>
<div class="t" style="left:517.20px;transform-origin:0 0;top:359px;font-size:4.96px;color:#333;font-weight:normal;transform:scaleX(0.8475);-webkit-text-stroke:0.16px #333;">36533</div>
<div class="t" style="left:559.60px;transform-origin:0 0;top:359px;font-size:4.96px;color:#333;font-weight:normal;transform:scaleX(0.8475);-webkit-text-stroke:0.16px #333;">09-07-15</div>
<div class="t" style="left:348.10px;transform-origin:0 0;top:372px;font-size:4.96px;color:#333;font-weight:normal;transform:scaleX(0.8475);-webkit-text-stroke:0.16px #333;">34</div>
<div class="t" style="left:390.40px;transform-origin:0 0;top:372px;font-size:4.96px;color:#4cb847;font-weight:normal;transform:scaleX(0.8475);-webkit-text-stroke:0.16px #4cb847;">Spanish Travel</div>
<div class="t" style="left:390.40px;transform-origin:0 0;top:378px;font-size:4.96px;color:#4cb847;font-weight:normal;transform:scaleX(0.8475);-webkit-text-stroke:0.16px #4cb847;">phrases</div>
<div class="t" style="left:432.50px;transform-origin:0 0;top:372px;font-size:4.96px;color:#333;font-weight:normal;transform:scaleX(0.8475);-webkit-text-stroke:0.16px #333;">Dictionaries</div>
<div class="t" style="left:475.20px;transform-origin:0 0;top:372px;font-size:4.96px;color:#333;font-weight:normal;transform:scaleX(0.8475);-webkit-text-stroke:0.16px #333;">Lyon</div>
<div class="t" style="left:517.20px;transform-origin:0 0;top:372px;font-size:4.96px;color:#333;font-weight:normal;transform:scaleX(0.8475);-webkit-text-stroke:0.16px #333;">38556</div>
<div class="t" style="left:559.60px;transform-origin:0 0;top:372px;font-size:4.96px;color:#333;font-weight:normal;transform:scaleX(0.8475);-webkit-text-stroke:0.16px #333;">09-07-15</div>
<div class="t" style="left:348.10px;transform-origin:0 0;top:392px;font-size:4.96px;color:#333;font-weight:normal;transform:scaleX(0.8475);-webkit-text-stroke:0.16px #333;">33</div>
<div class="t" style="left:390.40px;transform-origin:0 0;top:392px;font-size:4.96px;color:#4cb847;font-weight:normal;transform:scaleX(0.8475);-webkit-text-stroke:0.16px #4cb847;">Dictionary</div>
<div class="t" style="left:432.50px;transform-origin:0 0;top:392px;font-size:4.96px;color:#333;font-weight:normal;transform:scaleX(0.8475);-webkit-text-stroke:0.16px #333;">Dictionaries</div>
<div class="t" style="left:475.20px;transform-origin:0 0;top:392px;font-size:4.96px;color:#333;font-weight:normal;transform:scaleX(0.8475);-webkit-text-stroke:0.16px #333;">Madrid</div>
<div class="t" style="left:517.20px;transform-origin:0 0;top:392px;font-size:4.96px;color:#333;font-weight:normal;transform:scaleX(0.8475);-webkit-text-stroke:0.16px #333;">36320</div>
<div class="t" style="left:559.60px;transform-origin:0 0;top:392px;font-size:4.96px;color:#333;font-weight:normal;transform:scaleX(0.8475);-webkit-text-stroke:0.16px #333;">09-07-15</div></div>
</body></html>
